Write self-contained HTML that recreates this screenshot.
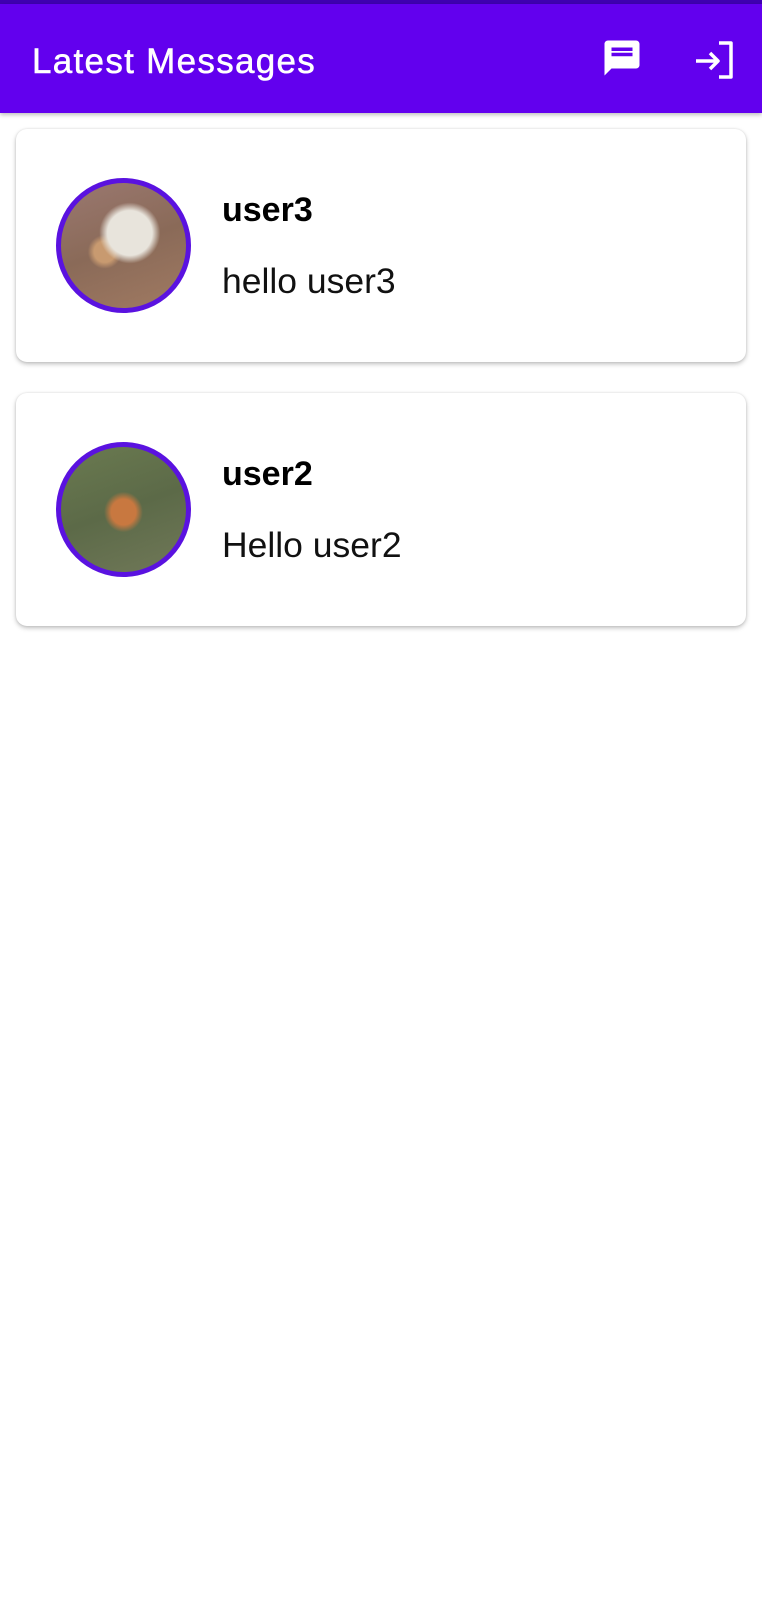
<!DOCTYPE html>
<html><head><meta charset="utf-8"><style>
*{margin:0;padding:0;box-sizing:border-box}
body{width:762px;height:1600px;background:#fff;font-family:"Liberation Sans",Roboto,sans-serif;position:relative;overflow:hidden}
.top{position:absolute;left:0;top:0;width:762px;height:4px;background:#3f00b0}
.bar{position:absolute;left:0;top:4px;width:762px;height:109px;background:#6200ee;box-shadow:0 2px 4px rgba(0,0,0,.25)}
.title{position:absolute;left:32px;top:38px;color:#fff;font-size:35px;line-height:40px;letter-spacing:1.3px;-webkit-text-stroke:0.5px #fff}
.card{position:absolute;left:16px;width:730px;height:233px;background:#fff;border-radius:11px;box-shadow:0 2px 5px rgba(0,0,0,.25),0 0 2px rgba(0,0,0,.1)}
.av{position:absolute;left:40px;width:135px;height:135px;border-radius:50%;border:5px solid #5a12e0;overflow:hidden}
.name{position:absolute;left:206px;font-weight:bold;font-size:34px;line-height:34px;color:#000}
.msg{position:absolute;left:206px;font-size:35.5px;line-height:35px;color:#111}
</style></head><body>
<div class="top"></div>
<div class="bar">
<div class="title">Latest Messages</div>
<svg style="position:absolute;left:601px;top:33px" width="42" height="42" viewBox="0 0 24 24"><path fill="#fff" d="M20 2H4c-1.1 0-2 .9-2 2v18l4-4h14c1.1 0 2-.9 2-2V4c0-1.1-.9-2-2-2zM6 9h12v2H6V9zm8 5H6v-2h8v2zm4-6H6V6h12v2z"/><path fill="#fff" d="M6 12h12v2H6z"/></svg>
<svg style="position:absolute;left:694px;top:36px" width="42" height="40" viewBox="0 0 42 40"><path d="M2 21h22M16 13l8 8-8 8M25 3h12v34H25" fill="none" stroke="#fff" stroke-width="3.5" stroke-linejoin="round"/></svg>
</div>
<div class="card" style="top:129px">
<div class="av" style="top:49px;background:radial-gradient(circle at 55% 40%,#e8e4dc 0 22%,transparent 30%),radial-gradient(circle at 35% 55%,#c89a70 0 10%,transparent 16%),linear-gradient(160deg,#9a7870,#8a6a58 50%,#a07a62)"></div>
<div class="name" style="top:64px">user3</div>
<div class="msg" style="top:135px">hello user3</div>
</div>
<div class="card" style="top:393px">
<div class="av" style="top:49px;background:radial-gradient(ellipse at 50% 52%,#c87840 0 14%,transparent 22%),linear-gradient(160deg,#6a7a50,#5c6a48 50%,#707858)"></div>
<div class="name" style="top:64px">user2</div>
<div class="msg" style="top:135px">Hello user2</div>
</div>
</body></html>
